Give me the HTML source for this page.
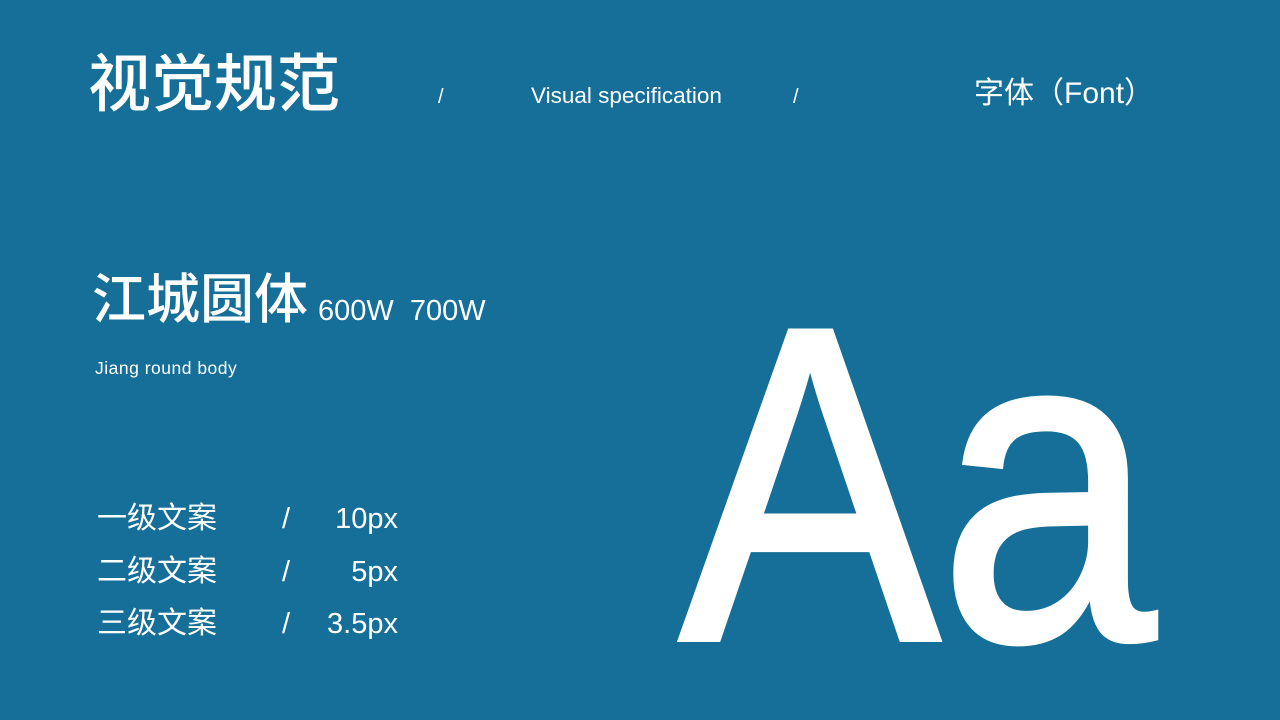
<!DOCTYPE html>
<html><head><meta charset="utf-8"><style>
html,body{margin:0;padding:0;overflow:hidden;width:1280px;height:720px}
body{background:#156f98;position:relative;color:#fff;font-family:"Liberation Sans","Noto Sans CJK SC",sans-serif}
.a{position:absolute;white-space:nowrap;line-height:1}
</style></head><body>
<div class="a" style="left:88px;top:54px;font-size:63px;font-weight:500">视觉规范</div>
<div class="a" style="left:438px;top:87px;font-size:20px">/</div>
<div class="a" style="left:531px;top:85px;font-size:22.5px">Visual specification</div>
<div class="a" style="left:793px;top:87px;font-size:20px">/</div>
<div class="a" style="left:974px;top:79px;font-size:30px">字体（Font）</div>
<div class="a" style="left:92px;top:273px;font-size:54px;font-weight:500">江城圆体</div>
<div class="a" style="left:318px;top:297px;font-size:29px">600W&nbsp;&nbsp;700W</div>
<div class="a" style="left:95px;top:360px;font-size:17.5px;letter-spacing:0.5px">Jiang round body</div>
<div class="a" style="left:97px;top:504px;font-size:30px">一级文案</div>
<div class="a" style="left:282px;top:505px;font-size:29px">/</div>
<div class="a" style="left:300px;width:98px;text-align:right;top:505px;font-size:29px">10px</div>
<div class="a" style="left:97px;top:557px;font-size:30px">二级文案</div>
<div class="a" style="left:282px;top:558px;font-size:29px">/</div>
<div class="a" style="left:300px;width:98px;text-align:right;top:558px;font-size:29px">5px</div>
<div class="a" style="left:97px;top:609px;font-size:30px">三级文案</div>
<div class="a" style="left:282px;top:610px;font-size:29px">/</div>
<div class="a" style="left:300px;width:98px;text-align:right;top:610px;font-size:29px">3.5px</div>
<div class="a" style="left:680px;top:261px;height:440px;font-size:447px;-webkit-text-stroke:6px #fff;transform:scaleX(0.87);transform-origin:0 0">Aa</div>
</body></html>
